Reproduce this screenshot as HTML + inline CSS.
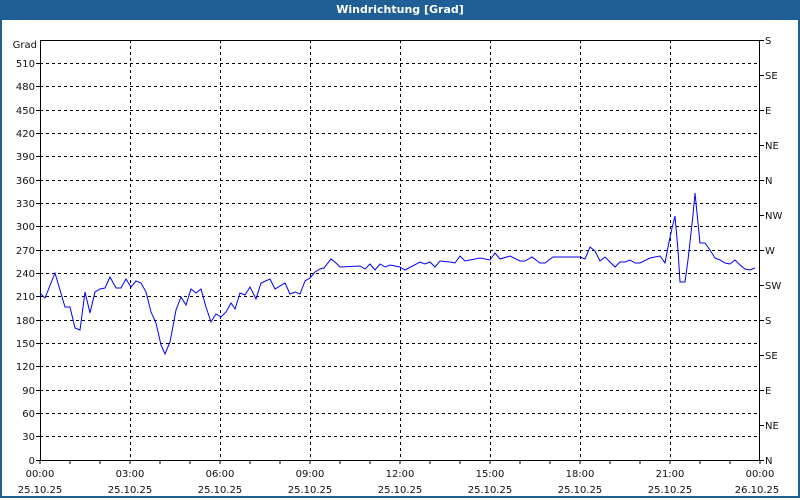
<!DOCTYPE html>
<html><head><meta charset="utf-8"><style>
body{margin:0;width:800px;height:500px;overflow:hidden;background:#fff;font-family:"DejaVu Sans","Liberation Sans",sans-serif;}
.frame{position:absolute;left:0;top:0;width:796px;height:496px;border:2px solid #1f5f96;border-top:none;}
.title{position:absolute;left:0;top:0;width:800px;height:20px;background:#1f5f96;color:#fff;font-size:11px;font-weight:bold;text-align:center;line-height:20px;}
svg{position:absolute;left:0;top:0}
svg text{font-family:"DejaVu Sans","Liberation Sans",sans-serif;font-size:10px;fill:#111}
</style></head><body>
<div class="frame"></div>
<div class="title">Windrichtung [Grad]</div>
<svg width="800" height="500" viewBox="0 0 800 500">
<g stroke="#000" stroke-width="1" stroke-dasharray="3,3" shape-rendering="crispEdges">
<line x1="40" y1="63.5" x2="760" y2="63.5"/><line x1="40" y1="86.5" x2="760" y2="86.5"/><line x1="40" y1="110.5" x2="760" y2="110.5"/><line x1="40" y1="133.5" x2="760" y2="133.5"/><line x1="40" y1="156.5" x2="760" y2="156.5"/><line x1="40" y1="180.5" x2="760" y2="180.5"/><line x1="40" y1="203.5" x2="760" y2="203.5"/><line x1="40" y1="226.5" x2="760" y2="226.5"/><line x1="40" y1="250.5" x2="760" y2="250.5"/><line x1="40" y1="273.5" x2="760" y2="273.5"/><line x1="40" y1="296.5" x2="760" y2="296.5"/><line x1="40" y1="320.5" x2="760" y2="320.5"/><line x1="40" y1="343.5" x2="760" y2="343.5"/><line x1="40" y1="366.5" x2="760" y2="366.5"/><line x1="40" y1="390.5" x2="760" y2="390.5"/><line x1="40" y1="413.5" x2="760" y2="413.5"/><line x1="40" y1="436.5" x2="760" y2="436.5"/>
<line x1="130.5" y1="40" x2="130.5" y2="460"/><line x1="220.5" y1="40" x2="220.5" y2="460"/><line x1="310.5" y1="40" x2="310.5" y2="460"/><line x1="400.5" y1="40" x2="400.5" y2="460"/><line x1="490.5" y1="40" x2="490.5" y2="460"/><line x1="580.5" y1="40" x2="580.5" y2="460"/><line x1="670.5" y1="40" x2="670.5" y2="460"/>
</g>
<g stroke="#000" stroke-width="1" shape-rendering="crispEdges" fill="none">
<rect x="40.5" y="40.5" width="719" height="420"/>
<path d="M40 460v4M70 460v4M100 460v4M130 460v4M160 460v4M190 460v4M220 460v4M250 460v4M280 460v4M310 460v4M340 460v4M370 460v4M400 460v4M430 460v4M460 460v4M490 460v4M520 460v4M550 460v4M580 460v4M610 460v4M640 460v4M670 460v4M700 460v4M730 460v4M760 460v4"/>
<path d="M36 63.5h4M36 86.5h4M36 110.5h4M36 133.5h4M36 156.5h4M36 180.5h4M36 203.5h4M36 226.5h4M36 250.5h4M36 273.5h4M36 296.5h4M36 320.5h4M36 343.5h4M36 366.5h4M36 390.5h4M36 413.5h4M36 436.5h4M36 460.5h4"/>
<path d="M760 40.5h4M760 75.5h4M760 110.5h4M760 145.5h4M760 180.5h4M760 215.5h4M760 250.5h4M760 285.5h4M760 320.5h4M760 355.5h4M760 390.5h4M760 425.5h4M760 460.5h4"/>
</g>
<polyline fill="none" stroke="#0000ff" stroke-width="1" points="40,293 45,298 55,273 65,307 70,307 75,328 80,330 85,292 90,313 95,292 100,289 105,288 110,277 116,288 121,288 126,279 131,287 136,281 141,283 146,292 151,312 156,323 161,345 165,354 170,342 176,310 181,297 186,305 191,289 196,293 201,289 206,307 211,322 216,314 221,317 226,312 231,303 235,309 240,293 245,295 250,287 256,299 261,283 270,279 275,289 285,283 290,294 295,292 300,294 305,281 310,278 315,272 320,269 324,268 331,259 335,262 340,267 360,266 365,269 370,264 375,270 380,264 385,267 390,265 400,267 405,270 420,262 425,264 430,262 435,267 440,261 450,262 455,263 460,256 465,261 480,258 490,260 495,253 500,259 510,256 520,261 525,261 532,257 540,263 545,263 553,257 580,257 585,259 590,247 595,251 600,261 605,257 615,267 620,262 625,262 630,260 635,263 640,263 650,258 660,256 665,263 668,247 672,228 675,216 678,250 680,282 685,282 688,260 693,215 695,193 700,243 705,243 710,250 715,258 720,260 725,263 730,264 735,260 740,265 745,269 750,270 755,268"/>
<g text-anchor="end">
<text x="37" y="48">Grad</text>
<text x="35" y="67">510</text><text x="35" y="90">480</text><text x="35" y="114">450</text><text x="35" y="137">420</text><text x="35" y="160">390</text><text x="35" y="184">360</text><text x="35" y="207">330</text><text x="35" y="230">300</text><text x="35" y="254">270</text><text x="35" y="277">240</text><text x="35" y="300">210</text><text x="35" y="324">180</text><text x="35" y="347">150</text><text x="35" y="370">120</text><text x="35" y="394">90</text><text x="35" y="417">60</text><text x="35" y="440">30</text><text x="35" y="464">0</text>
</g>
<g>
<text x="765" y="44">S</text><text x="765" y="79">SE</text><text x="765" y="114">E</text><text x="765" y="149">NE</text><text x="765" y="184">N</text><text x="765" y="219">NW</text><text x="765" y="254">W</text><text x="765" y="289">SW</text><text x="765" y="324">S</text><text x="765" y="359">SE</text><text x="765" y="394">E</text><text x="765" y="429">NE</text><text x="765" y="464">N</text>
</g>
<g text-anchor="middle">
<text x="40" y="477">00:00</text><text x="130" y="477">03:00</text><text x="220" y="477">06:00</text><text x="310" y="477">09:00</text><text x="400" y="477">12:00</text><text x="490" y="477">15:00</text><text x="580" y="477">18:00</text><text x="670" y="477">21:00</text><text x="760" y="477">00:00</text>
<text x="40" y="493">25.10.25</text><text x="130" y="493">25.10.25</text><text x="220" y="493">25.10.25</text><text x="310" y="493">25.10.25</text><text x="400" y="493">25.10.25</text><text x="490" y="493">25.10.25</text><text x="580" y="493">25.10.25</text><text x="670" y="493">25.10.25</text><text x="757" y="493">26.10.25</text>
</g>
</svg>
</body></html>
